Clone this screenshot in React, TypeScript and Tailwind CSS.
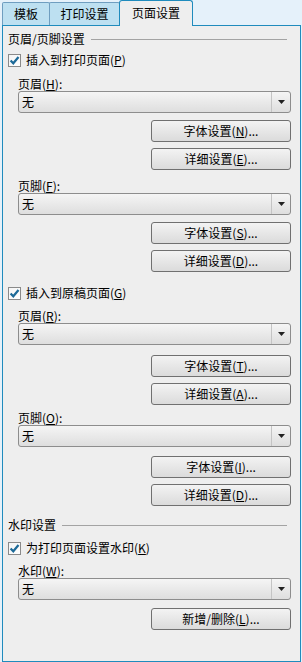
import React from "react"

const font = { fontFamily: '"Noto Sans CJK SC", "Noto Sans", sans-serif' }

function Key({ k }: { k: string }) {
    return <span className="underline underline-offset-[1px] decoration-[1px]">{k}</span>
}

function Mn({ text, k, tail = "" }: { text: string; k: string; tail?: string }) {
    return (
        <>
            {text}(<Key k={k} />){tail}
        </>
    )
}

function GroupHeader({ title, className = "" }: { title: string; className?: string }) {
    return (
        <div className={`flex items-center h-[16px] ${className}`}>
            <span className="leading-[16px]">{title}</span>
            <div className="flex-1 h-px bg-[#a3a3a3] ml-[6px] mr-[4px]" />
        </div>
    )
}

function CheckRow({ children, className = "" }: { children: React.ReactNode; className?: string }) {
    return (
        <div className={`flex items-center h-[16px] ${className}`}>
            <div className="w-[13px] h-[13px] border border-[#8a8a8a] bg-gradient-to-br from-[#f4f4f4] to-white flex items-center justify-center">
                <svg width="11" height="11" viewBox="0 0 11 11">
                    <path d="M1.6 5.4 L4.3 8.3 L9.5 2" fill="none" stroke="#1d6a98" strokeWidth="2.2" />
                </svg>
            </div>
            <span className="ml-[5px] leading-[16px]">{children}</span>
        </div>
    )
}

function FieldLabel({ children, className = "" }: { children: React.ReactNode; className?: string }) {
    return <div className={`ml-[10px] h-[14px] leading-[14px] ${className}`}>{children}</div>
}

function Select() {
    return (
        <div className="ml-[10px] h-[22px] flex items-stretch rounded-[3px] border border-[#8d8d8d] bg-gradient-to-b from-[#f5f5f5] to-[#dedede]">
            <div className="flex-1 pl-[3px] leading-[20px]">无</div>
            <div className="w-[19px] flex items-center justify-center border-l border-[#c4c4c4]">
                <svg width="7" height="4" viewBox="0 0 7 4">
                    <path d="M0 0 H7 L3.5 4 Z" fill="#222" />
                </svg>
            </div>
        </div>
    )
}

function Button({ children, className = "" }: { children: React.ReactNode; className?: string }) {
    return (
        <div className={`self-end w-[140px] h-[22px] rounded-[3px] border border-[#707070] bg-gradient-to-b from-[#f3f3f3] to-[#dbdbdb] text-center leading-[20px] ${className}`}>
            {children}
        </div>
    )
}

export default function App() {
    return (
        <div className="w-[302px] h-[662px] bg-[#e5f1fa] text-[12px] text-black" style={font}>
            {/* Tabs */}
            <div className="flex items-end h-[25px] pl-[2px]">
                <div className="h-[23px] w-[48px] border border-b-0 border-[#6f9ec0] rounded-t-[2px] bg-[#bde0f1] text-center leading-[22px]">
                    模板
                </div>
                <div className="h-[23px] w-[71px] -ml-px border border-b-0 border-[#6f9ec0] rounded-t-[2px] bg-[#bde0f1] text-center leading-[22px]">
                    打印设置
                </div>
                <div className="relative z-10 h-[26px] w-[74px] -ml-px -mb-px border border-b-0 border-[#1f8bbd] rounded-t-[3px] bg-[#eeeeee] text-center leading-[24px]">
                    页面设置
                </div>
            </div>

            {/* Panel */}
            <div className="ml-[2px] w-[299px] h-[637px] border border-[#1f8bbd] bg-[#eeeeee] pt-[5px] pl-[5px] pr-[9px] flex flex-col">
                <GroupHeader title="页眉/页脚设置" />
                <CheckRow className="mt-[5px]">
                    <Mn text="插入到打印页面" k="P" />
                </CheckRow>
                <FieldLabel className="mt-[9px]">
                    <Mn text="页眉" k="H" tail=":" />
                </FieldLabel>
                <Select />
                <Button className="mt-[7px]">
                    <Mn text="字体设置" k="N" tail="..." />
                </Button>
                <Button className="mt-[6px]">
                    <Mn text="详细设置" k="E" tail="..." />
                </Button>
                <FieldLabel className="mt-[9px]">
                    <Mn text="页脚" k="F" tail=":" />
                </FieldLabel>
                <Select />
                <Button className="mt-[7px]">
                    <Mn text="字体设置" k="S" tail="..." />
                </Button>
                <Button className="mt-[6px]">
                    <Mn text="详细设置" k="D" tail="..." />
                </Button>

                <CheckRow className="mt-[13px]">
                    <Mn text="插入到原稿页面" k="G" />
                </CheckRow>
                <FieldLabel className="mt-[8px]">
                    <Mn text="页眉" k="R" tail=":" />
                </FieldLabel>
                <Select />
                <Button className="mt-[10px]">
                    <Mn text="字体设置" k="T" tail="..." />
                </Button>
                <Button className="mt-[6px]">
                    <Mn text="详细设置" k="A" tail="..." />
                </Button>
                <FieldLabel className="mt-[6px]">
                    <Mn text="页脚" k="O" tail=":" />
                </FieldLabel>
                <Select />
                <Button className="mt-[9px]">
                    <Mn text="字体设置" k="I" tail="..." />
                </Button>
                <Button className="mt-[6px]">
                    <Mn text="详细设置" k="D" tail="..." />
                </Button>

                <GroupHeader title="水印设置" className="mt-[11px]" />
                <CheckRow className="mt-[7px]">
                    <Mn text="为打印页面设置水印" k="K" />
                </CheckRow>
                <FieldLabel className="mt-[8px]">
                    <Mn text="水印" k="W" tail=":" />
                </FieldLabel>
                <Select />
                <Button className="mt-[8px]">
                    <Mn text="新增/删除" k="L" tail="..." />
                </Button>
            </div>
        </div>
    )
}
